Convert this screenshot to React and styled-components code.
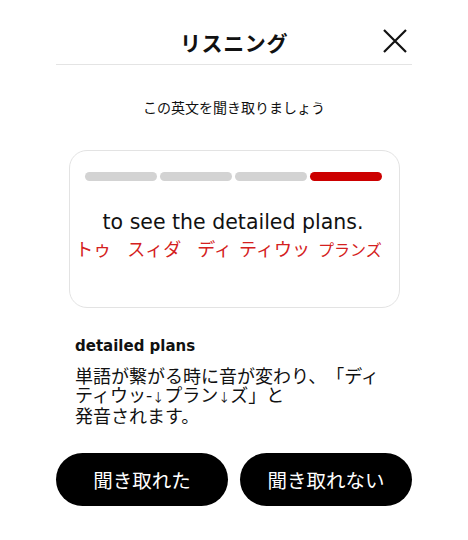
import React from "react";
import styled, { createGlobalStyle } from "styled-components";

const Global = createGlobalStyle`
  html, body { margin: 0; padding: 0; background: #ffffff; }
  body {
    font-family: "Noto Sans CJK JP", "Noto Sans", sans-serif;
    color: #111;
    text-spacing-trim: space-all;
  }
`;

const Page = styled.div`
  width: 356px;
  margin: 0 auto;
  padding-top: 20px;
  display: flex;
  flex-direction: column;
`;

const Header = styled.header`
  height: 44px;
  display: grid;
  grid-template-columns: 1fr auto 1fr;
  align-items: center;
  border-bottom: 1px solid #e4e4e4;
`;

const Title = styled.h1`
  grid-column: 2;
  margin: -1px 0 0;
  font-size: 21px;
  font-weight: 700;
  color: #111;
  line-height: 44px;
  letter-spacing: 0.6px;
`;

const CloseButton = styled.button`
  grid-column: 3;
  justify-self: end;
  margin-right: 5px;
  width: 25px;
  height: 25px;
  padding: 0;
  border: none;
  background: transparent;
  display: flex;
  align-items: center;
  justify-content: center;
  margin-top: -3px;
`;

const Instruction = styled.p`
  margin: 33px 0 0;
  text-align: center;
  font-size: 14px;
  line-height: 19px;
  color: #111;
`;

const Card = styled.section`
  width: 331px;
  margin: 33px auto 0;
  box-sizing: border-box;
  height: 158px;
  border: 1px solid #e3e3e3;
  border-radius: 18px;
  padding: 21px 17px 0 15px;
  display: flex;
  flex-direction: column;
  align-items: stretch;
`;

const Progress = styled.div`
  display: grid;
  grid-template-columns: repeat(4, 1fr);
  gap: 3px;
`;

const Segment = styled.div`
  height: 9px;
  border-radius: 5px;
  background: ${(p) => (p.$active ? "#cc0000" : "#d3d3d3")};
`;

const English = styled.p`
  margin: 28px 0 0;
  text-align: center;
  font-family: "DejaVu Sans", sans-serif;
  font-size: 20.5px;
  line-height: 26px;
  color: #111;
`;

const Kana = styled.p`
  margin: 1px -10px 0 -19px;
  text-align: center;
  font-size: 18px;
  line-height: 24px;
  color: #d42020;
  white-space: nowrap;
`;

const KanaWord = styled.span`
  display: inline-block;
  margin-right: ${(p) => p.$space || 0}px;
  font-size: ${(p) => (p.$small ? 16 : 18)}px;
`;

const Explain = styled.div`
  padding: 0 19px;
  margin-top: 27px;
`;

const Phrase = styled.h2`
  margin: 0;
  font-family: "DejaVu Sans", sans-serif;
  font-size: 15px;
  font-weight: 700;
  line-height: 22px;
  color: #111;
`;

const Desc = styled.p`
  margin: 9px 0 0;
  font-size: 18px;
  line-height: 19px;
  color: #111;
`;

const Arrow = styled.span`
  font-size: 12px;
`;

const Buttons = styled.div`
  margin-top: 28px;
  display: grid;
  grid-template-columns: 1fr 1fr;
  gap: 12px;
`;

const PillButton = styled.button`
  height: 53px;
  border: none;
  border-radius: 27px;
  background: #000;
  color: #fff;
  font-family: "Noto Sans CJK JP", sans-serif;
  font-size: 19.5px;
  padding: 0;
  cursor: pointer;
`;

export default function App() {
  return (
    <>
      <Global />
      <Page>
        <Header>
          <Title>リスニング</Title>
          <CloseButton aria-label="閉じる">
            <svg width="24" height="24" viewBox="0 0 24 24">
              <path d="M1 1 L23 23 M23 1 L1 23" stroke="#111" strokeWidth="2.2" fill="none" />
            </svg>
          </CloseButton>
        </Header>
        <Instruction>この英文を聞き取りましょう</Instruction>
        <Card>
          <Progress>
            <Segment />
            <Segment />
            <Segment />
            <Segment $active />
          </Progress>
          <English>to see the detailed plans.</English>
          <Kana>
            <KanaWord $space={16}>トゥ</KanaWord>
            <KanaWord $space={16}>スィダ</KanaWord>
            <KanaWord $space={7}>ディ</KanaWord>
            <KanaWord $space={8}>ティウッ</KanaWord>
            <KanaWord $small>プランズ</KanaWord>
          </Kana>
        </Card>
        <Explain>
          <Phrase>detailed plans</Phrase>
          <Desc>
            単語が繋がる時に音が変わり、「ディティウッ-<Arrow>↓</Arrow>プラン<Arrow>↓</Arrow>ズ」と
            <br />
            発音されます。
          </Desc>
        </Explain>
        <Buttons>
          <PillButton>聞き取れた</PillButton>
          <PillButton>聞き取れない</PillButton>
        </Buttons>
      </Page>
    </>
  );
}
